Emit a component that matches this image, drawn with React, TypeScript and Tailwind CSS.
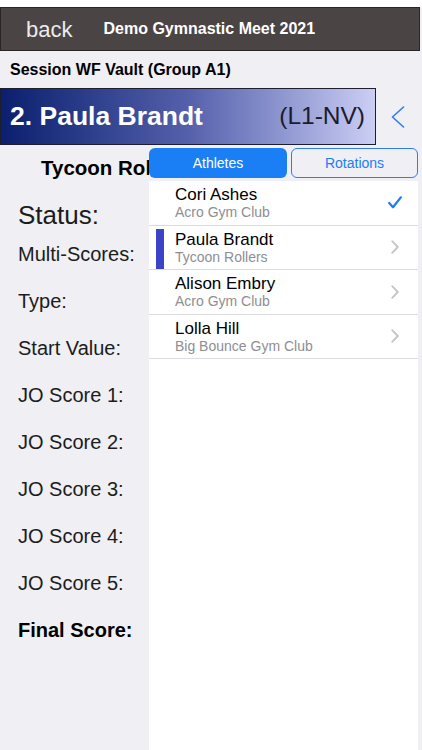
import React from "react";

const athletes = [
  { name: "Cori Ashes", club: "Acro Gym Club", selected: true, current: false },
  { name: "Paula Brandt", club: "Tycoon Rollers", selected: false, current: true },
  { name: "Alison Embry", club: "Acro Gym Club", selected: false, current: false },
  { name: "Lolla Hill", club: "Big Bounce Gym Club", selected: false, current: false },
];

const labels = [
  "Multi-Scores:",
  "Type:",
  "Start Value:",
  "JO Score 1:",
  "JO Score 2:",
  "JO Score 3:",
  "JO Score 4:",
  "JO Score 5:",
];

function AthleteRow({ a }: { a: (typeof athletes)[number] }) {
  return (
    <div className="relative flex h-[44.5px] items-center border-b border-[#dcdce0] bg-white">
      {a.current && <div className="absolute left-[7px] top-[3px] h-[40px] w-[8px] bg-[#3b43c6]"></div>}
      <div className="flex flex-1 flex-col pl-[26px]">
        <span className="text-[17px] leading-[19px] text-black">{a.name}</span>
        <span className="text-[14px] leading-[16px] text-[#8e8e93]">{a.club}</span>
      </div>
      <div className="flex w-[40px] justify-center pr-[6px]">
        {a.selected ? (
          <svg width="14" height="13" viewBox="0 0 14 13">
            <path d="M1.2 7 L5 11.2 L12.8 1.4" fill="none" stroke="#1a7ef5" strokeWidth="2.3" strokeLinecap="round" strokeLinejoin="round" />
          </svg>
        ) : (
          <svg width="8" height="14" viewBox="0 0 8 14">
            <path d="M1.2 1.2 L6.8 7 L1.2 12.8" fill="none" stroke="#c4c4c9" strokeWidth="1.8" strokeLinecap="round" strokeLinejoin="round" />
          </svg>
        )}
      </div>
    </div>
  );
}

export default function App() {
  return (
    <div className="relative h-[750px] w-[422px] overflow-hidden bg-[#efeff4] font-['Liberation_Sans',Arial,sans-serif]">
      <div className="h-[7px] bg-white"></div>
      <header className="flex h-[44px] w-[420px] items-center border border-[#2a2525] bg-[#4b4444]">
        <span className="pl-[25px] text-[22px] text-[#ececec]">back</span>
        <span className="ml-[31px] text-[16px] font-bold text-white">Demo Gymnastic Meet 2021</span>
      </header>
      <div className="flex h-[37px] items-center pl-[10px] text-[16px] font-bold text-black">
        Session WF Vault (Group A1)
      </div>
      <div className="flex h-[57px] items-center">
        <div className="flex h-full w-[376px] items-center justify-between border border-[#1e1e2e] bg-gradient-to-r from-[#0a1f6e] via-[#5560ab] to-[#cccef4] pl-[9px] pr-[10px]">
          <span className="text-[26.5px] font-bold text-white">2. Paula Brandt</span>
          <span className="text-[24.5px] text-[#1c1c2c]">(L1-NV)</span>
        </div>
        <div className="flex flex-1 justify-center pr-[2px]">
          <svg width="14" height="22" viewBox="0 0 14 22">
            <path d="M12.5 1 L1.5 11 L12.5 21" fill="none" stroke="#2d7cf6" strokeWidth="1.6" strokeLinecap="round" strokeLinejoin="round" />
          </svg>
        </div>
      </div>
      <div className="flex h-[46px] items-center pl-[41px] text-[20.5px] font-bold leading-none text-black">Tycoon Rollers</div>
      <div className="flex h-[39px] items-center pl-[18px] pt-[8px] text-[26px] leading-none text-[#1c1c1c]">Status:</div>
      {labels.map((l) => (
        <div key={l} className="flex h-[47px] items-center pl-[18px] text-[20px] leading-none text-[#1c1c1c]">
          {l}
        </div>
      ))}
      <div className="flex h-[47px] items-center pl-[18px] text-[20px] font-bold leading-none text-black">Final Score:</div>

      <div className="absolute bottom-0 left-[149px] right-[4px] top-[146px] flex flex-col bg-white">
        <div className="flex h-[35px] gap-[4px] bg-[#efeff4] pt-[2px] pb-[3px]">
          <div className="flex h-[30px] w-[138px] items-center justify-center rounded-[6px] bg-[#1a7ef5] text-[14px] text-white">
            Athletes
          </div>
          <div className="flex h-[30px] flex-1 items-center justify-center rounded-[6px] border border-[#2d7cf6] text-[14px] text-[#1a7ef5]">
            Rotations
          </div>
        </div>
        {athletes.map((a) => (
          <AthleteRow key={a.name} a={a} />
        ))}
      </div>
    </div>
  );
}
